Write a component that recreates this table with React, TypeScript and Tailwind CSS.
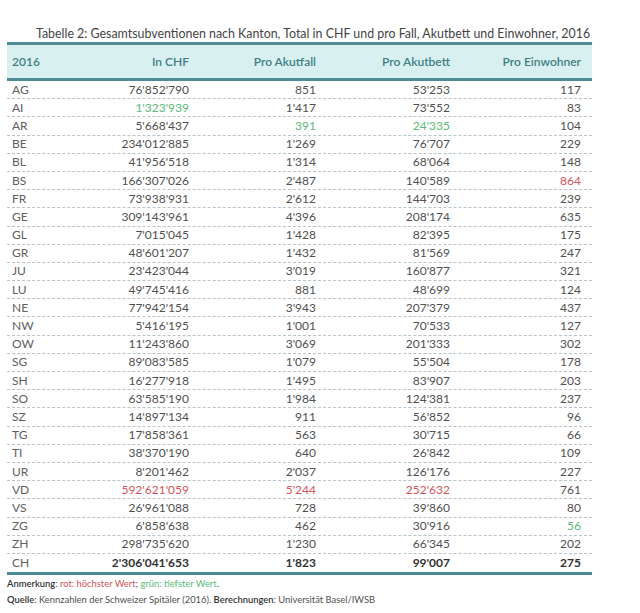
const rows: [string, string, string, string, string, string?][] = [
  ["AG", "76'852'790", "851", "53'253", "117"],
  ["AI", "1'323'939", "1'417", "73'552", "83", "g1"],
  ["AR", "5'668'437", "391", "24'335", "104", "g23"],
  ["BE", "234'012'885", "1'269", "76'707", "229"],
  ["BL", "41'956'518", "1'314", "68'064", "148"],
  ["BS", "166'307'026", "2'487", "140'589", "864", "r4"],
  ["FR", "73'938'931", "2'612", "144'703", "239"],
  ["GE", "309'143'961", "4'396", "208'174", "635"],
  ["GL", "7'015'045", "1'428", "82'395", "175"],
  ["GR", "48'601'207", "1'432", "81'569", "247"],
  ["JU", "23'423'044", "3'019", "160'877", "321"],
  ["LU", "49'745'416", "881", "48'699", "124"],
  ["NE", "77'942'154", "3'943", "207'379", "437"],
  ["NW", "5'416'195", "1'001", "70'533", "127"],
  ["OW", "11'243'860", "3'069", "201'333", "302"],
  ["SG", "89'083'585", "1'079", "55'504", "178"],
  ["SH", "16'277'918", "1'495", "83'907", "203"],
  ["SO", "63'585'190", "1'984", "124'381", "237"],
  ["SZ", "14'897'134", "911", "56'852", "96"],
  ["TG", "17'858'361", "563", "30'715", "66"],
  ["TI", "38'370'190", "640", "26'842", "109"],
  ["UR", "8'201'462", "2'037", "126'176", "227"],
  ["VD", "592'621'059", "5'244", "252'632", "761", "r123"],
  ["VS", "26'961'088", "728", "39'860", "80"],
  ["ZG", "6'858'638", "462", "30'916", "56", "g4"],
  ["ZH", "298'735'620", "1'230", "66'345", "202"],
];

function color(mark: string | undefined, col: number) {
  if (!mark) return "text-[#505050]";
  if (!mark.slice(1).includes(String(col))) return "text-[#505050]";
  return mark[0] === "r" ? "text-[#d4545a]" : "text-[#5cba7a]";
}

export default function App() {
  return (
    <div className="w-[640px] h-[613px] bg-white pt-[26px] text-[12px] leading-[16px] text-[#505050]" style={{ fontFamily: "Lato, 'Open Sans', sans-serif" }}>
      <div className="pl-[36px] text-[#444] text-[12.4px] leading-[16px] h-[16px] whitespace-nowrap">
        Tabelle 2: Gesamtsubventionen nach Kanton, Total in CHF und pro Fall, Akutbett und Einwohner, 2016
      </div>
      <div className="ml-[7px] w-[585px]">
        <div className="grid grid-cols-[40px_142px_127px_134px_135px] items-center h-[39px] bg-[#d9f0f0] border-t-[3px] border-b-[3px] border-[#4d8c97] text-[#3f7f84] font-semibold">
          <div className="pl-[5px]">2016</div>
          <div className="text-right">In CHF</div>
          <div className="text-right">Pro Akutfall</div>
          <div className="text-right">Pro Akutbett</div>
          <div className="text-right pr-[4px]">Pro Einwohner</div>
        </div>
        {rows.map((r) => (
          <div key={r[0]} className="grid grid-cols-[40px_142px_127px_134px_135px] items-center h-[18.2px] border-b border-dashed border-[#b8c4c8]">
            <div className="pl-[5px] text-[#606060]">{r[0]}</div>
            <div className={"text-right " + color(r[5], 1)}>{r[1]}</div>
            <div className={"text-right " + color(r[5], 2)}>{r[2]}</div>
            <div className={"text-right " + color(r[5], 3)}>{r[3]}</div>
            <div className={"text-right pr-[4px] " + color(r[5], 4)}>{r[4]}</div>
          </div>
        ))}
        <div className="grid grid-cols-[40px_142px_127px_134px_135px] items-center h-[21px] border-b-[3px] border-[#4d8c97] font-bold text-[#333]">
          <div className="pl-[5px] font-normal text-[#606060]">CH</div>
          <div className="text-right">2'306'041'653</div>
          <div className="text-right">1'823</div>
          <div className="text-right">99'007</div>
          <div className="text-right pr-[4px]">275</div>
        </div>
      </div>
      <div className="pl-[7px] pt-[1px] text-[9.4px] leading-[16px]">
        <div>
          <span className="font-semibold text-[#333]">Anmerkung</span>: <span className="text-[#d4545a]">rot: höchster Wert</span>; <span className="text-[#5cba7a]">grün: tiefster Wert</span>.
        </div>
        <div>
          <span className="font-semibold text-[#333]">Quelle</span>: Kennzahlen der Schweizer Spitäler (2016). <span className="font-semibold text-[#333]">Berechnungen</span>: Universität Basel/IWSB
        </div>
      </div>
    </div>
  );
}
